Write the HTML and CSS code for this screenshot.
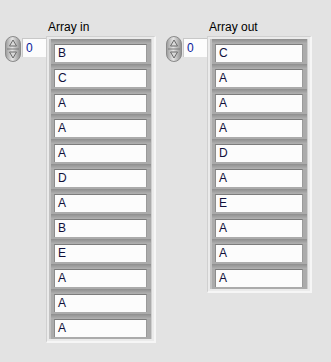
FILE: index.html
```html
<!DOCTYPE html>
<html lang="en">
<head>
  <meta charset="UTF-8" />
  <title>Array panel</title>
  <link rel="stylesheet" href="styles.css">
</head>
<body>
  <div class="panel">
    <div class="array-ctl array-in">
      <div class="label">Array in</div>
      <div class="ctl-body">
        <div class="index">
          <div class="spin">
            <svg width="16" height="26" viewBox="0 0 16 26">
              <defs>
                <linearGradient id="sg1" x1="0" y1="0" x2="1" y2="0">
                  <stop offset="0" stop-color="#9a9a9a"/>
                  <stop offset="0.45" stop-color="#e6e6e6"/>
                  <stop offset="1" stop-color="#8c8c8c"/>
                </linearGradient>
              </defs>
              <rect x="0.5" y="0.5" width="15" height="25" rx="7.5" fill="url(#sg1)" stroke="#8a8a8a"/>
              <line x1="2" y1="13" x2="14" y2="13" stroke="#7a7a7a"/>
              <path d="M8 4 L11.5 10 L4.5 10 Z" fill="#d8d8d8" stroke="#6a6a6a"/>
              <path d="M8 22 L11.5 16 L4.5 16 Z" fill="#d8d8d8" stroke="#6a6a6a"/>
            </svg>
          </div>
          <div class="idx">0</div>
        </div>
        <div class="frame">
          <div class="cell"><div class="val">B</div></div>
          <div class="cell"><div class="val">C</div></div>
          <div class="cell"><div class="val">A</div></div>
          <div class="cell"><div class="val">A</div></div>
          <div class="cell"><div class="val">A</div></div>
          <div class="cell"><div class="val">D</div></div>
          <div class="cell"><div class="val">A</div></div>
          <div class="cell"><div class="val">B</div></div>
          <div class="cell"><div class="val">E</div></div>
          <div class="cell"><div class="val">A</div></div>
          <div class="cell"><div class="val">A</div></div>
          <div class="cell"><div class="val">A</div></div>
        </div>
      </div>
    </div>

    <div class="array-ctl array-out">
      <div class="label">Array out</div>
      <div class="ctl-body">
        <div class="index">
          <div class="spin">
            <svg width="16" height="26" viewBox="0 0 16 26">
              <defs>
                <linearGradient id="sg2" x1="0" y1="0" x2="1" y2="0">
                  <stop offset="0" stop-color="#9a9a9a"/>
                  <stop offset="0.45" stop-color="#e6e6e6"/>
                  <stop offset="1" stop-color="#8c8c8c"/>
                </linearGradient>
              </defs>
              <rect x="0.5" y="0.5" width="15" height="25" rx="7.5" fill="url(#sg2)" stroke="#8a8a8a"/>
              <line x1="2" y1="13" x2="14" y2="13" stroke="#7a7a7a"/>
              <path d="M8 4 L11.5 10 L4.5 10 Z" fill="#d8d8d8" stroke="#6a6a6a"/>
              <path d="M8 22 L11.5 16 L4.5 16 Z" fill="#d8d8d8" stroke="#6a6a6a"/>
            </svg>
          </div>
          <div class="idx">0</div>
        </div>
        <div class="frame">
          <div class="cell"><div class="val">C</div></div>
          <div class="cell"><div class="val">A</div></div>
          <div class="cell"><div class="val">A</div></div>
          <div class="cell"><div class="val">A</div></div>
          <div class="cell"><div class="val">D</div></div>
          <div class="cell"><div class="val">A</div></div>
          <div class="cell"><div class="val">E</div></div>
          <div class="cell"><div class="val">A</div></div>
          <div class="cell"><div class="val">A</div></div>
          <div class="cell"><div class="val">A</div></div>
        </div>
      </div>
    </div>
  </div>
</body>
</html>
```

FILE: styles.css
```css
:root {
  --panel-bg: #e3e3e3;
  --cell-white: #fcfcfc;
  --text-color: #10103a;
  --index-color: #0a1a9a;
}

* {
  box-sizing: border-box;
  margin: 0;
  padding: 0;
}

body {
  background-color: var(--panel-bg);
  font-family: 'Liberation Sans', Arial, sans-serif;
  font-size: 12px;
  color: var(--text-color);
}

.panel {
  display: flex;
  align-items: flex-start;
  gap: 10px;
  padding: 19px 0 0 5px;
}

.label {
  margin-left: 43px;
  height: 17px;
  line-height: 16px;
  font-size: 12px;
  color: #000;
}

.ctl-body {
  display: flex;
  align-items: flex-start;
}

.index {
  display: flex;
  align-items: flex-start;
  width: 41px;
}

.spin {
  width: 16px;
  height: 26px;
  margin-right: 1px;
}

.spin svg {
  display: block;
}

.idx {
  width: 24px;
  height: 19px;
  margin-top: 2px;
  background-color: var(--cell-white);
  border-top: 1px solid #c8c8c8;
  border-left: 1px solid #c8c8c8;
  padding: 2px 0 0 3px;
  font-size: 12px;
  color: var(--index-color);
}

.frame {
  padding: 2px;
  border-top: 1px solid #d0d0d0;
  border-left: 1px solid #d0d0d0;
  border-right: 2px solid #f6f6f6;
  border-bottom: 2px solid #f6f6f6;
  background-color: #ebebeb;
}

.array-in .frame {
  width: 110px;
}

.array-out .frame {
  width: 105px;
}

.cell {
  height: 25px;
  padding: 5px 4px 2px 3px;
  background: linear-gradient(to bottom, #8e8e8e 0, #b2b2b2 5px, #ababab 5px);
  border-left: 2px solid #c2c2c2;
  border-right: 1px solid #cfcfcf;
}

.val {
  height: 18px;
  background-color: var(--cell-white);
  border-top: 1px solid #7c7c7c;
  border-left: 1px solid #8c8c8c;
  border-right: 1px solid #9a9a9a;
  padding: 1px 0 0 3px;
  line-height: 15px;
  font-size: 12px;
}
```
